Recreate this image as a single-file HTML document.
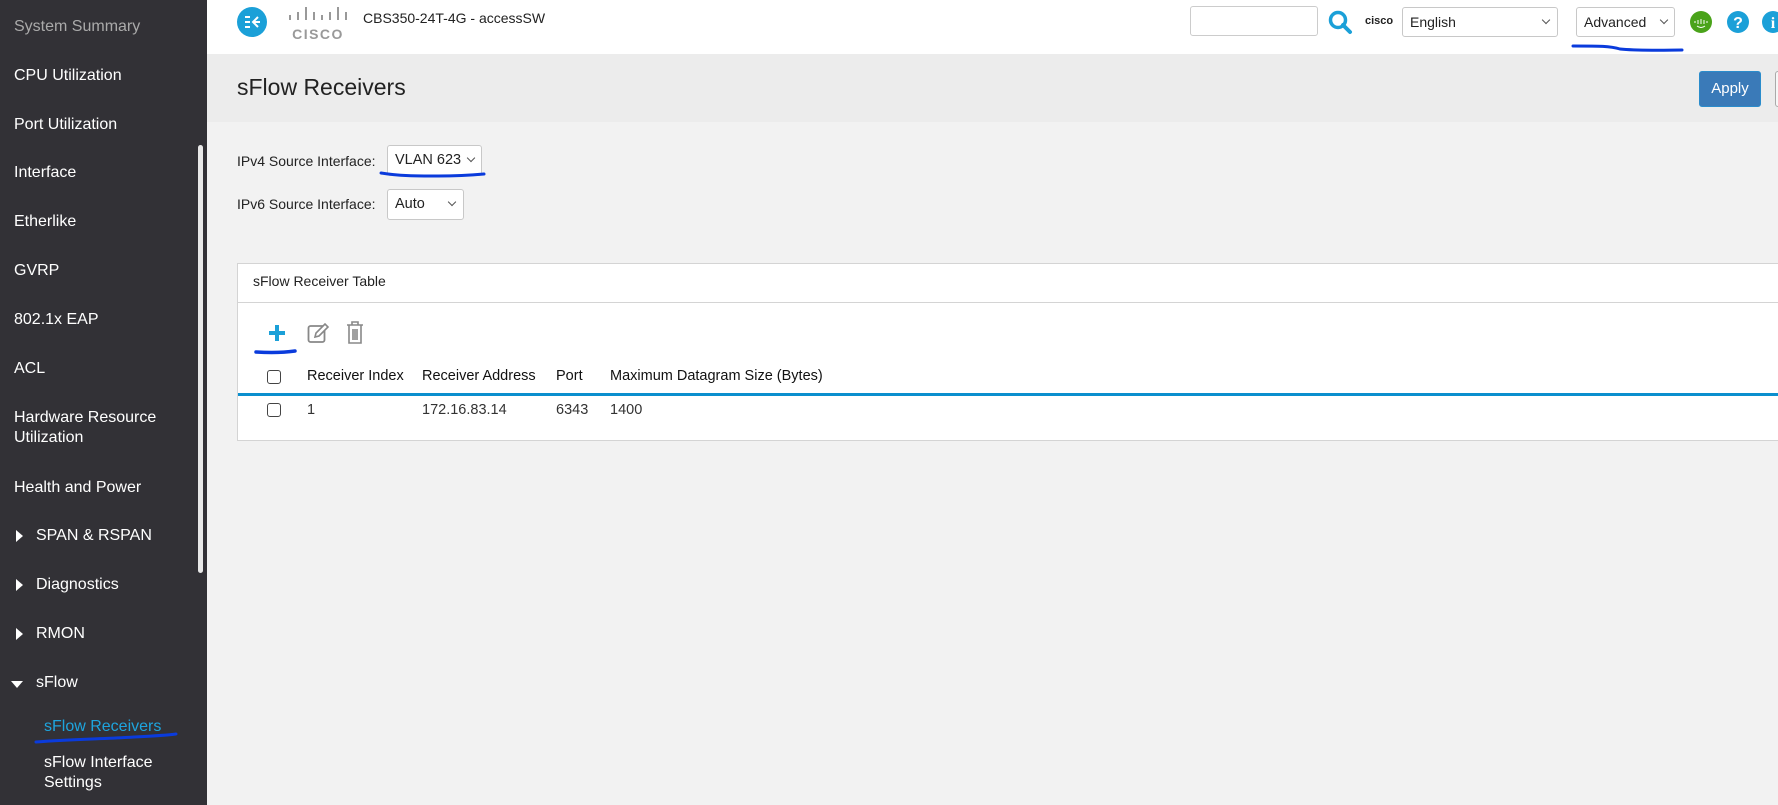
<!DOCTYPE html>
<html><head><meta charset="utf-8"><style>
*{margin:0;padding:0;box-sizing:border-box}
body{width:1778px;height:805px;overflow:hidden;background:#f2f2f2;font-family:"Liberation Sans",sans-serif;position:relative;color:#222}
.sb{position:absolute;left:0;top:0;width:207px;height:805px;background:#323136}
.sb div{position:absolute;left:14px;color:#fff;font-size:16px;line-height:20px}
.scroll{position:absolute;left:198px;top:145px;width:5px;height:428px;background:#e8e8e8;border-radius:3px}
.tri{position:absolute;width:0;height:0}
.hdr{position:absolute;left:207px;top:0;right:0;height:54px;background:#fff}
.tb{position:absolute;left:207px;top:54px;right:0;height:68px;background:#ececec}
.abs{position:absolute}
.sel{position:absolute;background:#fff;border:1px solid #c8c8c8;border-radius:3px;font-size:14px;padding-left:7px;color:#222}
.chev{position:absolute;width:6px;height:6px;border-right:1.3px solid #555;border-bottom:1.3px solid #555;transform:rotate(45deg)}
.cb{position:absolute;width:14px;height:14px;border:1.5px solid #444;border-radius:3px;background:#fff}
.th{position:absolute;font-size:14.5px;color:#111}
.td{position:absolute;font-size:14.5px;color:#333}
.ul{position:absolute;height:3px;background:#0a3bdc;border-radius:2px}
</style></head><body>
<div class="sb">
<div style="top:17px;color:#aaa">System Summary</div>
<div style="top:66px">CPU Utilization</div>
<div style="top:115px">Port Utilization</div>
<div style="top:163px">Interface</div>
<div style="top:212px">Etherlike</div>
<div style="top:261px">GVRP</div>
<div style="top:310px">802.1x EAP</div>
<div style="top:359px">ACL</div>
<div style="top:408px">Hardware Resource<br>Utilization</div>
<div style="top:478px">Health and Power</div>
<div style="top:526px;left:36px">SPAN &amp; RSPAN</div>
<div style="top:575px;left:36px">Diagnostics</div>
<div style="top:624px;left:36px">RMON</div>
<div style="top:673px;left:36px">sFlow</div>
<div style="top:717px;left:44px;color:#1ea4dd">sFlow Receivers</div>
<div style="top:753px;left:44px">sFlow Interface<br>Settings</div>
<span class="tri" style="left:16px;top:530px;border-left:7px solid #fff;border-top:6px solid transparent;border-bottom:6px solid transparent"></span>
<span class="tri" style="left:16px;top:579px;border-left:7px solid #fff;border-top:6px solid transparent;border-bottom:6px solid transparent"></span>
<span class="tri" style="left:16px;top:628px;border-left:7px solid #fff;border-top:6px solid transparent;border-bottom:6px solid transparent"></span>
<span class="tri" style="left:11px;top:681px;border-top:7px solid #fff;border-left:6px solid transparent;border-right:6px solid transparent"></span>
<span class="scroll"></span>
</div>
<svg class="abs" style="left:34px;top:731px" width="146" height="14"><path d="M2 11 C40 8 70 8 100 6 C120 5 135 4 142 3" stroke="#0a3bdc" stroke-width="3" fill="none" stroke-linecap="round"/></svg>

<div class="hdr"></div>
<svg class="abs" style="left:237px;top:7px" width="30" height="30"><circle cx="15" cy="15" r="15" fill="#1ba0d8"/><path d="M8 10h5M8 15h5M8 20h5M21 10l-5 5 5 5M16 15h7" stroke="#fff" stroke-width="2" fill="none"/></svg>
<svg class="abs" style="left:287px;top:5px" width="62" height="36"><g stroke="#999" stroke-width="2"><path d="M3 10v5M11 7v8M19 2v13M27 7v8M35 10v5M43 7v8M51 2v13M59 7v8"/></g><text x="31" y="34" text-anchor="middle" font-family="Liberation Sans" font-weight="bold" font-size="14" fill="#999" letter-spacing="1.5">CISCO</text></svg>
<div class="abs" style="left:363px;top:10px;font-size:14px;color:#222">CBS350-24T-4G - accessSW</div>

<div class="abs" style="left:1190px;top:6px;width:128px;height:30px;border:1px solid #ccc;border-radius:3px;background:#fff"></div>
<svg class="abs" style="left:1327px;top:9px" width="26" height="26"><circle cx="11" cy="11" r="7.5" stroke="#1ba0d8" stroke-width="3.5" fill="none"/><path d="M16 16l7 7" stroke="#1ba0d8" stroke-width="4" stroke-linecap="round"/></svg>
<div class="abs" style="left:1365px;top:15px;font-size:11px;font-weight:bold;color:#222">cisco</div>
<div class="sel" style="left:1402px;top:7px;width:156px;height:30px;line-height:28px">English<span class="chev" style="left:140px;top:9px"></span></div>
<div class="sel" style="left:1576px;top:7px;width:99px;height:30px;line-height:28px">Advanced<span class="chev" style="left:84px;top:9px"></span></div>
<svg class="abs" style="left:1570px;top:43px" width="116" height="10"><path d="M3 3 C30 3 40 3 50 6 C70 8 100 7 112 7" stroke="#0a3bdc" stroke-width="3" fill="none" stroke-linecap="round"/></svg>
<svg class="abs" style="left:1690px;top:11px" width="22" height="22"><circle cx="11" cy="11" r="11" fill="#4aa31a"/><path d="M5 10v2M8 9v4M11 8v5M14 9v4M17 10v2M7 15q4 3 8 0" stroke="#fff" stroke-width="1" fill="none"/></svg>
<svg class="abs" style="left:1727px;top:11px" width="22" height="22"><circle cx="11" cy="11" r="11" fill="#1ba0d8"/><text x="11" y="17" text-anchor="middle" font-family="Liberation Sans" font-weight="bold" font-size="16" fill="#fff">?</text></svg>
<svg class="abs" style="left:1762px;top:11px" width="16" height="22"><circle cx="11" cy="11" r="11" fill="#1ba0d8"/><text x="11" y="17" text-anchor="middle" font-family="Liberation Serif" font-weight="bold" font-size="16" fill="#fff">i</text></svg>

<div class="tb"></div>
<div class="abs" style="left:237px;top:74px;font-size:23px;color:#222">sFlow Receivers</div>
<div class="abs" style="left:1699px;top:71px;width:62px;height:36px;background:#3a7ab8;border:1px solid #2a8ccc;border-radius:3px;color:#fff;font-size:15px;text-align:center;line-height:34px">Apply</div>
<div class="abs" style="left:1775px;top:71px;width:10px;height:36px;border:1px solid #aaa;border-radius:3px;background:#f7f7f7"></div>

<div class="abs" style="left:237px;top:153px;font-size:14px">IPv4 Source Interface:</div>
<div class="sel" style="left:387px;top:145px;width:95px;height:31px;line-height:29px;font-size:14.5px">VLAN 623<span class="chev" style="left:80px;top:9px"></span></div>
<svg class="abs" style="left:378px;top:170px" width="110" height="10"><path d="M3 3 C20 6 40 6 60 6 C80 6 95 5 106 4" stroke="#0a3bdc" stroke-width="3" fill="none" stroke-linecap="round"/></svg>
<div class="abs" style="left:237px;top:196px;font-size:14px">IPv6 Source Interface:</div>
<div class="sel" style="left:387px;top:189px;width:77px;height:31px;line-height:29px;font-size:14.5px">Auto<span class="chev" style="left:61px;top:9px"></span></div>

<div class="abs" style="left:237px;top:263px;width:1560px;height:178px;background:#fff;border:1px solid #d4d4d4"></div>
<div class="abs" style="left:237px;top:302px;width:1560px;height:1px;background:#d4d4d4"></div>
<div class="abs" style="left:253px;top:273px;font-size:14px;color:#222">sFlow Receiver Table</div>
<svg class="abs" style="left:268px;top:324px" width="18" height="18"><path d="M9 1v16M1 9h16" stroke="#1ba0d8" stroke-width="4"/></svg>
<svg class="abs" style="left:307px;top:322px" width="24" height="22"><rect x="1.5" y="4" width="16" height="16" rx="2" stroke="#888" stroke-width="1.8" fill="none"/><path d="M8 15l1-4 9-9 3 3-9 9z" fill="#fff" stroke="#888" stroke-width="1.6"/></svg>
<svg class="abs" style="left:346px;top:321px" width="18" height="24"><path d="M1 4h16M6 4V1h6v3M3 4v18h12V4M7 8v11M9 8v11M11 8v11" stroke="#888" stroke-width="1.6" fill="none"/></svg>
<svg class="abs" style="left:253px;top:347px" width="46" height="10"><path d="M3 5 C20 6 35 5 42 4" stroke="#0a3bdc" stroke-width="3.5" fill="none" stroke-linecap="round"/></svg>

<span class="cb" style="left:267px;top:370px"></span>
<div class="th" style="left:307px;top:368px">Receiver Index</div>
<div class="th" style="left:422px;top:368px">Receiver Address</div>
<div class="th" style="left:556px;top:368px">Port</div>
<div class="th" style="left:610px;top:368px">Maximum Datagram Size (Bytes)</div>
<div class="abs" style="left:238px;top:393px;width:1540px;height:3px;background:#0b8fce"></div>
<span class="cb" style="left:267px;top:403px"></span>
<div class="td" style="left:307px;top:402px">1</div>
<div class="td" style="left:422px;top:402px">172.16.83.14</div>
<div class="td" style="left:556px;top:402px">6343</div>
<div class="td" style="left:610px;top:402px">1400</div>
</body></html>
